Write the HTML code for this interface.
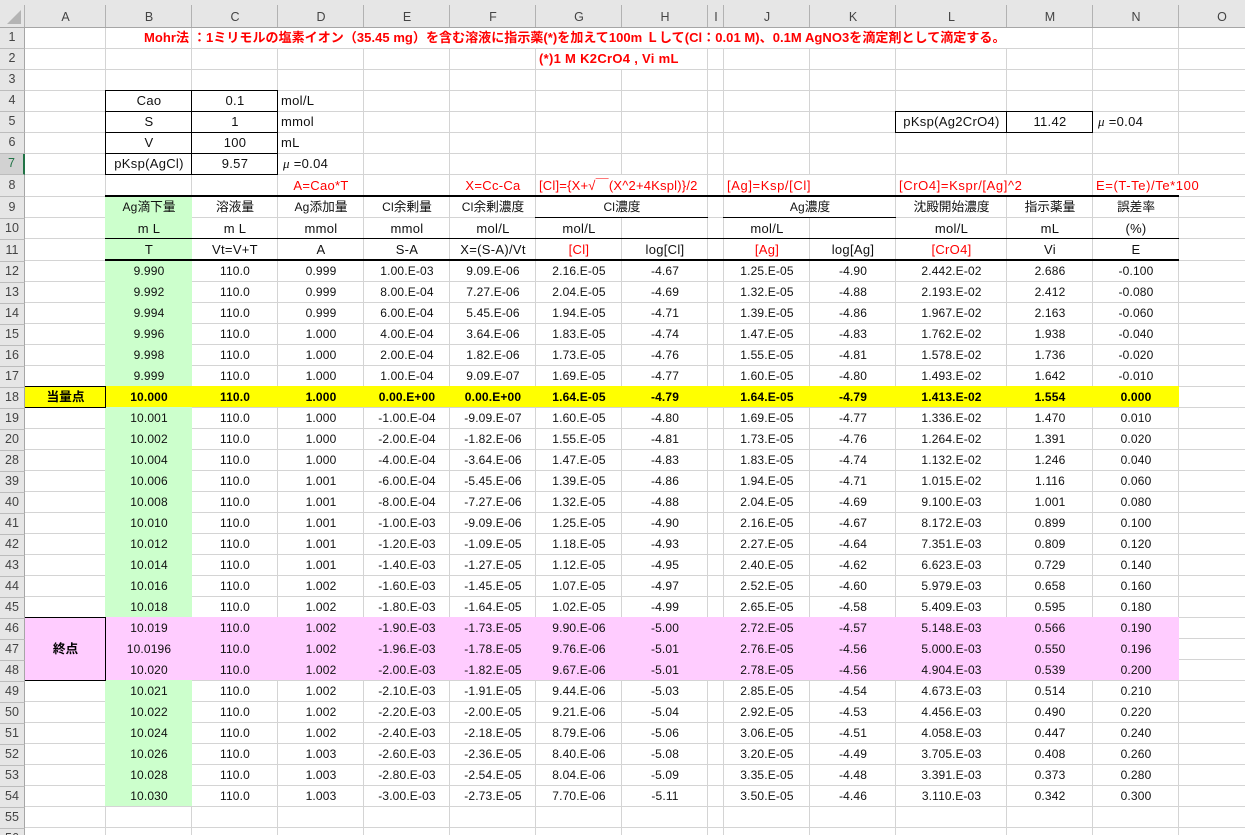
<!DOCTYPE html>
<html lang="ja">
<head>
<meta charset="utf-8">
<title>Mohr法</title>
<style>
html,body{margin:0;padding:0;background:#fff}
#s{position:relative;width:1245px;height:835px;overflow:hidden;background-color:#fff;
background-image:
linear-gradient(#d4d4d4,#d4d4d4),linear-gradient(#d4d4d4,#d4d4d4),linear-gradient(#d4d4d4,#d4d4d4),linear-gradient(#d4d4d4,#d4d4d4),linear-gradient(#d4d4d4,#d4d4d4),linear-gradient(#d4d4d4,#d4d4d4),linear-gradient(#d4d4d4,#d4d4d4),linear-gradient(#d4d4d4,#d4d4d4),linear-gradient(#d4d4d4,#d4d4d4),linear-gradient(#d4d4d4,#d4d4d4),linear-gradient(#d4d4d4,#d4d4d4),linear-gradient(#d4d4d4,#d4d4d4),linear-gradient(#d4d4d4,#d4d4d4),linear-gradient(#d4d4d4,#d4d4d4),
linear-gradient(#d4d4d4,#d4d4d4),linear-gradient(#d4d4d4,#d4d4d4),linear-gradient(#d4d4d4,#d4d4d4),linear-gradient(#d4d4d4,#d4d4d4),
repeating-linear-gradient(to bottom,transparent 0 20px,#d4d4d4 20px 21px),
repeating-linear-gradient(to bottom,transparent 0 20px,#d4d4d4 20px 21px);
background-repeat:no-repeat;
background-position:105px 0,191px 0,277px 0,363px 0,449px 0,535px 0,621px 0,707px 0,723px 0,809px 0,895px 0,1006px 0,1092px 0,1178px 0,
0 196px,0 217px,0 238px,0 260px,0 28px,0 261px;
background-size:1px 100%,1px 100%,1px 100%,1px 100%,1px 100%,1px 100%,1px 100%,1px 100%,1px 100%,1px 100%,1px 100%,1px 100%,1px 100%,1px 100%,
100% 1px,100% 1px,100% 1px,100% 1px,100% 147px,100% 574px;
}
.a{position:absolute}
.w{background:#fff}.k{background:#000}.g{background:#ccffcc}.y{background:#ffff00}.p{background:#ffccff}
table{position:absolute;left:0;top:0;width:1265px;table-layout:fixed;border-collapse:separate;border-spacing:0;
font:12px/19px "Liberation Sans","Noto Sans CJK JP",sans-serif;color:#111;letter-spacing:.15px}
td{padding:0;height:21px;box-sizing:border-box;text-align:center;vertical-align:top;white-space:nowrap;overflow:visible}
td.h{background:#e6e6e6;border-right:1px solid #a6a6a6;border-bottom:1px solid #bcbcbc;color:#444;font-size:12.5px;line-height:19px;letter-spacing:0}
tr.t td{height:28px;padding-top:8px;line-height:18px;background:#e6e6e6 linear-gradient(#b2b2b2,#b2b2b2) right bottom/1px 22px no-repeat;border-bottom:1px solid #a6a6a6;color:#444;font-size:12.5px;letter-spacing:0}
tr.t td:first-child{padding:0}
tr.b22 td{height:22px;line-height:20px}
tr.r8 td{line-height:21px}
tr.r9 td{line-height:21px}
.l{text-align:left;padding-left:3px}
.r{text-align:right;padding-right:3px}
.red{color:#f00}
.x td{font-weight:bold;color:#000}
.j{font-size:12.7px;letter-spacing:0}
.bl{font-weight:bold;color:#f00;font-size:13px;letter-spacing:.05px;line-height:20px}
.q{font-size:13px;letter-spacing:.3px}
.s{letter-spacing:.6px}
.m{font-family:"Liberation Serif","Noto Sans CJK JP",serif;font-style:italic;font-size:13px;margin-left:2px}
</style>
</head>
<body>
<div id="s">
<div class="a w" style="left:192px;top:28px;width:900px;height:20px"></div>
<div class="a w" style="left:621px;top:49px;width:1px;height:20px"></div>
<div class="a w" style="left:621px;top:175px;width:1px;height:20px"></div>
<div class="a w" style="left:809px;top:175px;width:1px;height:20px"></div>
<div class="a w" style="left:1006px;top:175px;width:1px;height:20px"></div>
<div class="a w" style="left:1178px;top:175px;width:1px;height:20px"></div>
<div class="a w" style="left:621px;top:197px;width:1px;height:20px"></div>
<div class="a w" style="left:809px;top:197px;width:1px;height:20px"></div>
<div class="a g" style="left:105px;top:197px;width:87px;height:189px"></div>
<div class="a g" style="left:105px;top:407px;width:87px;height:210px"></div>
<div class="a g" style="left:105px;top:680px;width:87px;height:126px"></div>
<div class="a y" style="left:25px;top:386px;width:1154px;height:21px"></div>
<div class="a p" style="left:25px;top:617px;width:1154px;height:63px"></div>
<div class="a k" style="left:105px;top:195px;width:1074px;height:2px"></div>
<div class="a k" style="left:535px;top:217px;width:173px;height:1px"></div>
<div class="a k" style="left:723px;top:217px;width:173px;height:1px"></div>
<div class="a k" style="left:105px;top:238px;width:1074px;height:1px"></div>
<div class="a k" style="left:105px;top:259px;width:1074px;height:2px"></div>
<div class="a" style="left:105px;top:90px;width:171px;height:83px;border:1px solid #000"></div>
<div class="a k" style="left:105px;top:111px;width:172px;height:1px"></div>
<div class="a k" style="left:105px;top:132px;width:172px;height:1px"></div>
<div class="a k" style="left:105px;top:153px;width:172px;height:1px"></div>
<div class="a k" style="left:191px;top:90px;width:1px;height:84px"></div>
<div class="a" style="left:895px;top:111px;width:196px;height:20px;border:1px solid #000"></div>
<div class="a k" style="left:1006px;top:111px;width:1px;height:21px"></div>
<div class="a" style="left:24px;top:386px;width:80px;height:20px;border:1px solid #000"></div>
<div class="a" style="left:24px;top:617px;width:80px;height:62px;border:1px solid #000"></div>

<table>
<colgroup><col style="width:25px"><col style="width:81px"><col style="width:86px"><col style="width:86px"><col style="width:86px"><col style="width:86px"><col style="width:86px"><col style="width:86px"><col style="width:86px"><col style="width:16px"><col style="width:86px"><col style="width:86px"><col style="width:111px"><col style="width:86px"><col style="width:86px"><col style="width:86px"></colgroup>
<tr class="t"><td></td><td>A</td><td>B</td><td>C</td><td>D</td><td>E</td><td>F</td><td>G</td><td>H</td><td>I</td><td>J</td><td>K</td><td>L</td><td>M</td><td>N</td><td>O</td></tr>
<tr><td class="h">1</td><td></td><td class="r bl">Mohr法</td><td class="l bl" style="padding-left:1px">：1ミリモルの塩素イオン（35.45 mg）を含む溶液に指示薬(*)を加えて100m Ｌして(Cl：0.01 M)、0.1M AgNO3を滴定剤として滴定する。</td></tr>
<tr><td class="h">2</td><td></td><td></td><td></td><td></td><td></td><td></td><td class="l bl" style="letter-spacing:.3px">(*)1 M K2CrO4 , Vi mL</td></tr>
<tr><td class="h">3</td></tr>
<tr><td class="h">4</td><td></td><td class="q">Cao</td><td class="q">0.1</td><td class="l q">mol/L</td></tr>
<tr><td class="h">5</td><td></td><td class="q">S</td><td class="q">1</td><td class="l q">mmol</td><td></td><td></td><td></td><td></td><td></td><td></td><td></td><td class="q">pKsp(Ag2CrO4)</td><td class="q">11.42</td><td class="l q"><span class="m">μ</span> =0.04</td></tr>
<tr><td class="h">6</td><td></td><td class="q">V</td><td class="q">100</td><td class="l q">mL</td></tr>
<tr><td class="h" style="background:#d2d2d2;border-right:2px solid #217346;color:#217346">7</td><td></td><td class="q">pKsp(AgCl)</td><td class="q">9.57</td><td class="l q"><span class="m">μ</span> =0.04</td></tr>
<tr class="b22 r8"><td class="h">8</td><td></td><td></td><td></td><td class="red q">A=Cao*T</td><td></td><td class="red q">X=Cc-Ca</td><td class="l red q" style="letter-spacing:.2px">[Cl]={X+√￣(X^2+4Kspl)}/2</td><td></td><td></td><td class="l red q s">[Ag]=Ksp/[Cl]</td><td></td><td class="l red q s">[CrO4]=Kspr/[Ag]^2</td><td></td><td class="l red q s">E=(T-Te)/Te*100</td></tr>
<tr class="r9"><td class="h">9</td><td></td><td>Ag<span class="j">滴下量</span></td><td><span class="j">溶液量</span></td><td>Ag<span class="j">添加量</span></td><td>Cl<span class="j">余剰量</span></td><td>Cl<span class="j">余剰濃度</span></td><td colspan="2">Cl<span class="j">濃度</span></td><td></td><td colspan="2">Ag<span class="j">濃度</span></td><td><span class="j">沈殿開始濃度</span></td><td><span class="j">指示薬量</span></td><td><span class="j">誤差率</span></td></tr>
<tr><td class="h">10</td><td></td><td class="q">m L</td><td class="q">m L</td><td class="q">mmol</td><td class="q">mmol</td><td class="q">mol/L</td><td class="q">mol/L</td><td></td><td></td><td class="q">mol/L</td><td></td><td class="q">mol/L</td><td class="q">mL</td><td class="q">(%)</td></tr>
<tr class="b22"><td class="h">11</td><td></td><td class="q">T</td><td class="q">Vt=V+T</td><td class="q">A</td><td class="q">S-A</td><td class="q">X=(S-A)/Vt</td><td class="red q">[Cl]</td><td class="q">log[Cl]</td><td></td><td class="red q">[Ag]</td><td class="q">log[Ag]</td><td class="red q">[CrO4]</td><td class="q">Vi</td><td class="q">E</td></tr>
<tr><td class="h">12</td><td></td><td>9.990</td><td>110.0</td><td>0.999</td><td>1.00.E-03</td><td>9.09.E-06</td><td>2.16.E-05</td><td>-4.67</td><td></td><td>1.25.E-05</td><td>-4.90</td><td>2.442.E-02</td><td>2.686</td><td>-0.100</td></tr>
<tr><td class="h">13</td><td></td><td>9.992</td><td>110.0</td><td>0.999</td><td>8.00.E-04</td><td>7.27.E-06</td><td>2.04.E-05</td><td>-4.69</td><td></td><td>1.32.E-05</td><td>-4.88</td><td>2.193.E-02</td><td>2.412</td><td>-0.080</td></tr>
<tr><td class="h">14</td><td></td><td>9.994</td><td>110.0</td><td>0.999</td><td>6.00.E-04</td><td>5.45.E-06</td><td>1.94.E-05</td><td>-4.71</td><td></td><td>1.39.E-05</td><td>-4.86</td><td>1.967.E-02</td><td>2.163</td><td>-0.060</td></tr>
<tr><td class="h">15</td><td></td><td>9.996</td><td>110.0</td><td>1.000</td><td>4.00.E-04</td><td>3.64.E-06</td><td>1.83.E-05</td><td>-4.74</td><td></td><td>1.47.E-05</td><td>-4.83</td><td>1.762.E-02</td><td>1.938</td><td>-0.040</td></tr>
<tr><td class="h">16</td><td></td><td>9.998</td><td>110.0</td><td>1.000</td><td>2.00.E-04</td><td>1.82.E-06</td><td>1.73.E-05</td><td>-4.76</td><td></td><td>1.55.E-05</td><td>-4.81</td><td>1.578.E-02</td><td>1.736</td><td>-0.020</td></tr>
<tr><td class="h">17</td><td></td><td>9.999</td><td>110.0</td><td>1.000</td><td>1.00.E-04</td><td>9.09.E-07</td><td>1.69.E-05</td><td>-4.77</td><td></td><td>1.60.E-05</td><td>-4.80</td><td>1.493.E-02</td><td>1.642</td><td>-0.010</td></tr>
<tr class="x"><td class="h" style="font-weight:normal;color:#444">18</td><td><span class="j">当量点</span></td><td>10.000</td><td>110.0</td><td>1.000</td><td>0.00.E+00</td><td>0.00.E+00</td><td>1.64.E-05</td><td>-4.79</td><td></td><td>1.64.E-05</td><td>-4.79</td><td>1.413.E-02</td><td>1.554</td><td>0.000</td></tr>
<tr><td class="h">19</td><td></td><td>10.001</td><td>110.0</td><td>1.000</td><td>-1.00.E-04</td><td>-9.09.E-07</td><td>1.60.E-05</td><td>-4.80</td><td></td><td>1.69.E-05</td><td>-4.77</td><td>1.336.E-02</td><td>1.470</td><td>0.010</td></tr>
<tr><td class="h">20</td><td></td><td>10.002</td><td>110.0</td><td>1.000</td><td>-2.00.E-04</td><td>-1.82.E-06</td><td>1.55.E-05</td><td>-4.81</td><td></td><td>1.73.E-05</td><td>-4.76</td><td>1.264.E-02</td><td>1.391</td><td>0.020</td></tr>
<tr><td class="h">28</td><td></td><td>10.004</td><td>110.0</td><td>1.000</td><td>-4.00.E-04</td><td>-3.64.E-06</td><td>1.47.E-05</td><td>-4.83</td><td></td><td>1.83.E-05</td><td>-4.74</td><td>1.132.E-02</td><td>1.246</td><td>0.040</td></tr>
<tr><td class="h">39</td><td></td><td>10.006</td><td>110.0</td><td>1.001</td><td>-6.00.E-04</td><td>-5.45.E-06</td><td>1.39.E-05</td><td>-4.86</td><td></td><td>1.94.E-05</td><td>-4.71</td><td>1.015.E-02</td><td>1.116</td><td>0.060</td></tr>
<tr><td class="h">40</td><td></td><td>10.008</td><td>110.0</td><td>1.001</td><td>-8.00.E-04</td><td>-7.27.E-06</td><td>1.32.E-05</td><td>-4.88</td><td></td><td>2.04.E-05</td><td>-4.69</td><td>9.100.E-03</td><td>1.001</td><td>0.080</td></tr>
<tr><td class="h">41</td><td></td><td>10.010</td><td>110.0</td><td>1.001</td><td>-1.00.E-03</td><td>-9.09.E-06</td><td>1.25.E-05</td><td>-4.90</td><td></td><td>2.16.E-05</td><td>-4.67</td><td>8.172.E-03</td><td>0.899</td><td>0.100</td></tr>
<tr><td class="h">42</td><td></td><td>10.012</td><td>110.0</td><td>1.001</td><td>-1.20.E-03</td><td>-1.09.E-05</td><td>1.18.E-05</td><td>-4.93</td><td></td><td>2.27.E-05</td><td>-4.64</td><td>7.351.E-03</td><td>0.809</td><td>0.120</td></tr>
<tr><td class="h">43</td><td></td><td>10.014</td><td>110.0</td><td>1.001</td><td>-1.40.E-03</td><td>-1.27.E-05</td><td>1.12.E-05</td><td>-4.95</td><td></td><td>2.40.E-05</td><td>-4.62</td><td>6.623.E-03</td><td>0.729</td><td>0.140</td></tr>
<tr><td class="h">44</td><td></td><td>10.016</td><td>110.0</td><td>1.002</td><td>-1.60.E-03</td><td>-1.45.E-05</td><td>1.07.E-05</td><td>-4.97</td><td></td><td>2.52.E-05</td><td>-4.60</td><td>5.979.E-03</td><td>0.658</td><td>0.160</td></tr>
<tr><td class="h">45</td><td></td><td>10.018</td><td>110.0</td><td>1.002</td><td>-1.80.E-03</td><td>-1.64.E-05</td><td>1.02.E-05</td><td>-4.99</td><td></td><td>2.65.E-05</td><td>-4.58</td><td>5.409.E-03</td><td>0.595</td><td>0.180</td></tr>
<tr><td class="h">46</td><td></td><td>10.019</td><td>110.0</td><td>1.002</td><td>-1.90.E-03</td><td>-1.73.E-05</td><td>9.90.E-06</td><td>-5.00</td><td></td><td>2.72.E-05</td><td>-4.57</td><td>5.148.E-03</td><td>0.566</td><td>0.190</td></tr>
<tr><td class="h">47</td><td style="font-weight:bold;color:#000"><span class="j">終点</span></td><td>10.0196</td><td>110.0</td><td>1.002</td><td>-1.96.E-03</td><td>-1.78.E-05</td><td>9.76.E-06</td><td>-5.01</td><td></td><td>2.76.E-05</td><td>-4.56</td><td>5.000.E-03</td><td>0.550</td><td>0.196</td></tr>
<tr><td class="h">48</td><td></td><td>10.020</td><td>110.0</td><td>1.002</td><td>-2.00.E-03</td><td>-1.82.E-05</td><td>9.67.E-06</td><td>-5.01</td><td></td><td>2.78.E-05</td><td>-4.56</td><td>4.904.E-03</td><td>0.539</td><td>0.200</td></tr>
<tr><td class="h">49</td><td></td><td>10.021</td><td>110.0</td><td>1.002</td><td>-2.10.E-03</td><td>-1.91.E-05</td><td>9.44.E-06</td><td>-5.03</td><td></td><td>2.85.E-05</td><td>-4.54</td><td>4.673.E-03</td><td>0.514</td><td>0.210</td></tr>
<tr><td class="h">50</td><td></td><td>10.022</td><td>110.0</td><td>1.002</td><td>-2.20.E-03</td><td>-2.00.E-05</td><td>9.21.E-06</td><td>-5.04</td><td></td><td>2.92.E-05</td><td>-4.53</td><td>4.456.E-03</td><td>0.490</td><td>0.220</td></tr>
<tr><td class="h">51</td><td></td><td>10.024</td><td>110.0</td><td>1.002</td><td>-2.40.E-03</td><td>-2.18.E-05</td><td>8.79.E-06</td><td>-5.06</td><td></td><td>3.06.E-05</td><td>-4.51</td><td>4.058.E-03</td><td>0.447</td><td>0.240</td></tr>
<tr><td class="h">52</td><td></td><td>10.026</td><td>110.0</td><td>1.003</td><td>-2.60.E-03</td><td>-2.36.E-05</td><td>8.40.E-06</td><td>-5.08</td><td></td><td>3.20.E-05</td><td>-4.49</td><td>3.705.E-03</td><td>0.408</td><td>0.260</td></tr>
<tr><td class="h">53</td><td></td><td>10.028</td><td>110.0</td><td>1.003</td><td>-2.80.E-03</td><td>-2.54.E-05</td><td>8.04.E-06</td><td>-5.09</td><td></td><td>3.35.E-05</td><td>-4.48</td><td>3.391.E-03</td><td>0.373</td><td>0.280</td></tr>
<tr><td class="h">54</td><td></td><td>10.030</td><td>110.0</td><td>1.003</td><td>-3.00.E-03</td><td>-2.73.E-05</td><td>7.70.E-06</td><td>-5.11</td><td></td><td>3.50.E-05</td><td>-4.46</td><td>3.110.E-03</td><td>0.342</td><td>0.300</td></tr>
<tr><td class="h">55</td></tr>
<tr><td class="h">56</td></tr>
</table>
<svg class="a" style="left:0;top:0" width="24" height="27"><polygon points="21,10 21,24 7,24" fill="#b4b4b4"/></svg>
</div>
</body>
</html>
